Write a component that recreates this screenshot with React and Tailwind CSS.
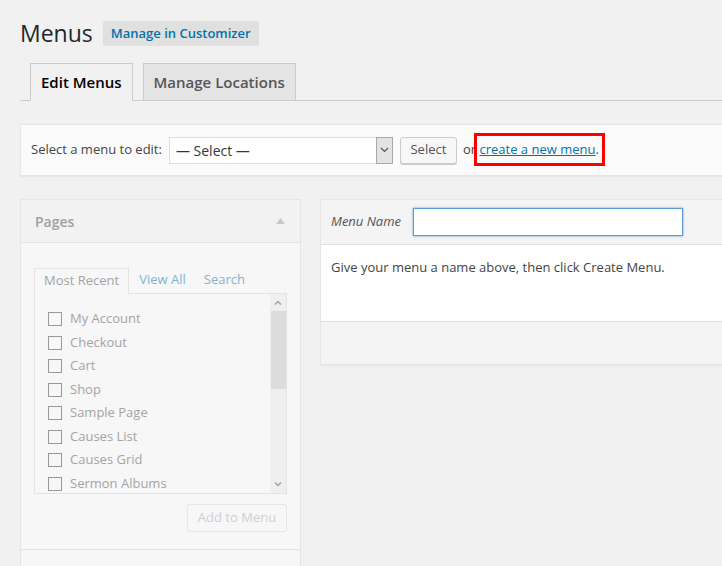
import React from "react";

const pages = [
  "My Account",
  "Checkout",
  "Cart",
  "Shop",
  "Sample Page",
  "Causes List",
  "Causes Grid",
  "Sermon Albums",
];

export default function App() {
  return (
    <div
      className="w-[722px] h-[566px] overflow-hidden bg-[#f1f1f1] text-[#444]"
      style={{ fontFamily: '"Open Sans", "Liberation Sans", sans-serif' }}
    >
      <div className="pl-[20px]">
        {/* ================= TITLE ================= */}
        <div className="flex items-center pt-[21px] h-[46px]">
          <h1 className="text-[23px] leading-[25px] text-[#23282d] font-normal">Menus</h1>
          <span className="ml-[10px] h-[25px] px-[8px] flex items-center bg-[#e0e0e0] rounded-[2px] text-[13px] font-semibold text-[#0073aa]">
            Manage in Customizer
          </span>
        </div>

        {/* ================= TABS ================= */}
        <div className="mt-[17px] flex items-end h-[38px] border-b border-[#ccc] pl-[10px] gap-[10px]">
          <div className="h-[38px] -mb-px px-[10px] flex items-center bg-[#f1f1f1] border border-[#ccc] border-b-[#f1f1f1] text-[15px] font-semibold text-[#000]">
            Edit Menus
          </div>
          <div className="h-[37px] px-[10px] flex items-center bg-[#e4e4e4] border border-[#ccc] border-b-0 text-[15px] font-semibold text-[#555]">
            Manage Locations
          </div>
        </div>

        {/* ================= SELECT MENU ================= */}
        <div className="mt-[23px] w-[720px] h-[52px] bg-[#fbfbfb] border border-[#e5e5e5] shadow-[0_1px_1px_rgba(0,0,0,0.04)] flex items-center pl-[10px] text-[13px]">
          <span className="text-[#444]">Select a menu to edit:</span>
          <div className="ml-[7px] w-[224px] h-[27px] flex border border-[#ddd] bg-white">
            <span className="flex-1 flex items-center pl-[6px] text-[14px] text-[#32373c]">— Select —</span>
            <span className="w-[17px] flex items-center justify-center bg-[#e3e3e3] border border-[#a9a9a9] -m-px">
              <svg width="9" height="6" viewBox="0 0 9 6">
                <path d="M1 1 L4.5 4.5 L8 1" fill="none" stroke="#555" strokeWidth="1.2" />
              </svg>
            </span>
          </div>
          <span className="ml-[7px] h-[27px] w-[57px] flex items-center justify-center bg-[#f7f7f7] border border-[#ccc] rounded-[3px] text-[#555] shadow-[0_1px_0_#ccc]">
            Select
          </span>
          <span className="ml-[6px] relative text-[#444]">
            or{" "}
            <span className="relative">
              <span className="text-[#0073aa] underline">create a new menu</span>.
              <span className="absolute -left-[5px] -top-[7px] w-[131px] h-[33px] border-[3px] border-[#ff0000]" />
            </span>
          </span>
        </div>

        {/* ================= COLUMNS ================= */}
        <div className="mt-[23px] flex gap-[19px] items-start">
          {/* Pages panel */}
          <div className="w-[281px] shrink-0 border border-[#e5e5e5] bg-[#f7f7f7] h-[400px]">
            <div className="h-[43px] bg-[#f2f2f2] border-b border-[#e5e5e5] flex items-center justify-between pl-[14px] pr-[15px]">
              <span className="text-[14px] font-semibold text-[#a0a0a0]">Pages</span>
              <svg width="9" height="6" viewBox="0 0 9 6">
                <path d="M4.5 0 L9 6 L0 6 Z" fill="#c8c8c8" />
              </svg>
            </div>
            <div className="pl-[13px] pr-[13px] pt-[24px]">
              <div className="flex items-end h-[26px] text-[13px]">
                <span className="h-[26px] px-[9px] flex items-center border border-[#e3e3e3] border-b-[#f7f7f7] -mb-px bg-[#f7f7f7] text-[#a4a4a4] relative z-10">
                  Most Recent
                </span>
                <span className="ml-[10px] h-[26px] flex items-center text-[#7fb3d5]">View All</span>
                <span className="ml-[18px] h-[26px] flex items-center text-[#7fb3d5]">Search</span>
              </div>
              <div className="h-[201px] border border-[#e3e3e3] flex">
                <div className="flex-1 pl-[13px] pt-[18px] flex flex-col gap-[9.5px]">
                  {pages.map((p) => (
                    <label key={p} className="flex items-center gap-[8px] h-[14px] text-[13px] text-[#a4a4a4]">
                      <span className="w-[14px] h-[14px] border border-[#999] bg-[#f7f7f7] shrink-0" />
                      {p}
                    </label>
                  ))}
                </div>
                <div className="w-[16px] bg-[#efefef] flex flex-col items-center">
                  <div className="h-[17px] flex items-center justify-center">
                    <svg width="8" height="5" viewBox="0 0 8 5">
                      <path d="M1 4.5 L4 1.5 L7 4.5" fill="none" stroke="#a0a0a0" strokeWidth="1.4" />
                    </svg>
                  </div>
                  <div className="w-[15px] h-[78px] bg-[#dcdcdc]" />
                  <div className="flex-1" />
                  <div className="h-[17px] flex items-center justify-center">
                    <svg width="8" height="5" viewBox="0 0 8 5">
                      <path d="M1 0.5 L4 3.5 L7 0.5" fill="none" stroke="#a0a0a0" strokeWidth="1.4" />
                    </svg>
                  </div>
                </div>
              </div>
              <div className="flex justify-end mt-[10px]">
                <span className="h-[28px] w-[100px] flex items-center justify-center border border-[#e6e6e6] rounded-[3px] text-[13px] text-[#cfcfcf]">
                  Add to Menu
                </span>
              </div>
            </div>
            <div className="mt-[17px] border-t border-[#e3e3e3]" />
          </div>

          {/* Menu edit panel */}
          <div className="w-[420px] shrink-0 border border-[#e5e5e5] shadow-[0_1px_1px_rgba(0,0,0,0.04)]">
            <div className="h-[45px] bg-[#f4f4f4] border-b border-[#dfdfdf] flex items-center pl-[10px]">
              <span className="text-[13px] italic text-[#555]">Menu Name</span>
              <span className="ml-[12px] w-[270px] h-[28px] bg-white border border-[#5b9dd9] shadow-[0_0_2px_rgba(30,140,190,0.8)]" />
            </div>
            <div className="h-[76px] bg-white pl-[10px] pt-[13px] text-[13px] text-[#444]">
              Give your menu a name above, then click Create Menu.
            </div>
            <div className="h-[43px] bg-[#f4f4f4] border-t border-[#dfdfdf]" />
          </div>
        </div>
      </div>
    </div>
  );
}
